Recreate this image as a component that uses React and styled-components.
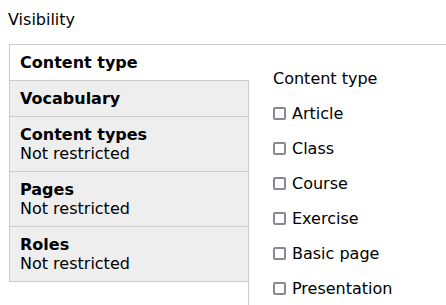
import React, { useState } from 'react';
import styled, { createGlobalStyle } from 'styled-components';

const GlobalStyle = createGlobalStyle`
  html, body {
    margin: 0;
    padding: 0;
    overflow: hidden;
    background: #fff;
  }
  body {
    padding: 8px 0 0 8px;
    font-family: "DejaVu Sans", sans-serif;
    font-size: 16px;
    line-height: 19px;
    color: #000;
  }
`;

const Legend = styled.div`
  margin-top: 2px;
`;

const Tabs = styled.div`
  display: flex;
  align-items: flex-start;
  margin-top: 15px;
  margin-left: 1px;
  width: 480px;
`;

const TabList = styled.ul`
  list-style: none;
  margin: 0;
  padding: 0;
  width: 240px;
  flex-shrink: 0;
  border-top: 1px solid #ccc;
  position: relative;
  z-index: 1;
`;

const Tab = styled.li`
  padding: 8px 10px;
  background: ${(p) => (p.$active ? '#fff' : '#eee')};
  border: 1px solid #ccc;
  border-top: 0;
  border-right: ${(p) => (p.$active ? '0' : '1px solid #ccc')};
  margin-right: ${(p) => (p.$active ? '-1px' : '0')};
  width: ${(p) => (p.$active ? '240px' : 'auto')};
  box-sizing: border-box;
  cursor: pointer;
`;

const TabTitle = styled.strong`
  display: block;
  font-weight: bold;
`;

const Summary = styled.span`
  display: block;
`;

const Pane = styled.div`
  flex: 1;
  margin-left: -1px;
  border-top: 1px solid #ccc;
  border-left: 1px solid #ccc;
  padding: 24px 24px 60px;
  display: flex;
  flex-direction: column;
  gap: 16px;
`;

const Row = styled.label`
  display: flex;
  align-items: center;
  gap: 6px;
  cursor: pointer;
`;

const Box = styled.input`
  appearance: none;
  margin: 0;
  width: 13px;
  height: 13px;
  box-sizing: border-box;
  border: 2px solid #8b8794;
  border-radius: 2px;
  background: #fff;

  &:checked {
    background: #0074bd;
    border-color: #0074bd;
  }
`;

const tabs = [
  { id: 'type', title: 'Content type' },
  { id: 'vocab', title: 'Vocabulary' },
  { id: 'types', title: 'Content types', summary: 'Not restricted' },
  { id: 'pages', title: 'Pages', summary: 'Not restricted' },
  { id: 'roles', title: 'Roles', summary: 'Not restricted' },
];

const types = ['Article', 'Class', 'Course', 'Exercise', 'Basic page', 'Presentation'];

const App = () => {
  const [active, setActive] = useState('type');
  const [checked, setChecked] = useState({});

  return (
    <>
      <GlobalStyle />
      <Legend>Visibility</Legend>
      <Tabs>
        <TabList>
          {tabs.map((t) => (
            <Tab key={t.id} $active={active === t.id} onClick={() => setActive(t.id)}>
              <TabTitle>{t.title}</TabTitle>
              {t.summary && <Summary>{t.summary}</Summary>}
            </Tab>
          ))}
        </TabList>
        <Pane>
          <div>Content type</div>
          {types.map((name) => (
            <Row key={name}>
              <Box
                type="checkbox"
                checked={!!checked[name]}
                onChange={() => setChecked({ ...checked, [name]: !checked[name] })}
              />
              {name}
            </Row>
          ))}
        </Pane>
      </Tabs>
    </>
  );
};

export default App;
